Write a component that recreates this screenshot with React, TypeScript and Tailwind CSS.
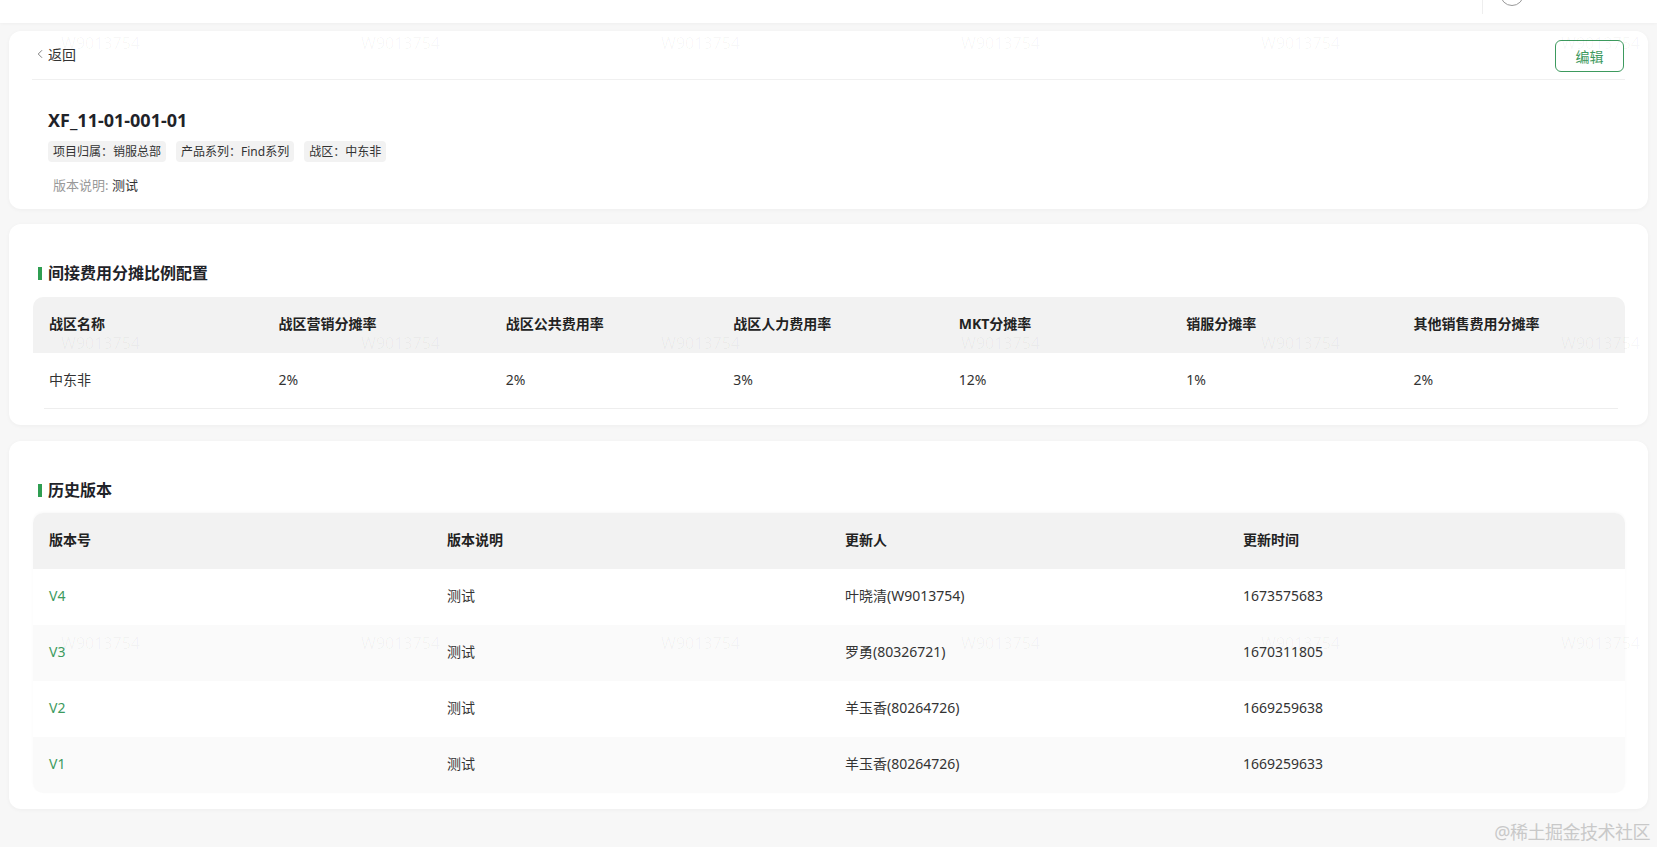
import React from 'react';
import { ChevronLeft } from 'lucide-react';

const rateHeaders = ['战区名称', '战区营销分摊率', '战区公共费用率', '战区人力费用率', 'MKT分摊率', '销服分摊率', '其他销售费用分摊率'];
const rateRow = ['中东非', '2%', '2%', '3%', '12%', '1%', '2%'];

const versions = [
  { no: 'V4', desc: '测试', user: '叶晓清(W9013754)', time: '1673575683' },
  { no: 'V3', desc: '测试', user: '罗勇(80326721)', time: '1670311805' },
  { no: 'V2', desc: '测试', user: '羊玉香(80264726)', time: '1669259638' },
  { no: 'V1', desc: '测试', user: '羊玉香(80264726)', time: '1669259633' },
];

function SectionTitle({ children }: { children: React.ReactNode }) {
  return (
    <div className="flex items-center h-[20px] pl-[5px]">
      <span className="w-[4px] h-[13px] bg-[#2f9e52] mr-[6px]" />
      <h2 className="text-[16px] font-semibold text-[#1f2329] leading-[20px]">{children}</h2>
    </div>
  );
}

function Watermark() {
  const marks = [];
  for (let r = 0; r < 3; r++) {
    for (let c = 0; c < 6; c++) {
      marks.push(
        <span
          key={`${r}-${c}`}
          className="absolute text-[16px] leading-[20px] text-[rgba(0,0,0,0.035)] whitespace-nowrap"
          style={{ left: 61 + c * 300, top: 33 + r * 300 }}
        >
          W9013754
        </span>
      );
    }
  }
  return <div className="pointer-events-none absolute inset-0 overflow-hidden">{marks}</div>;
}

export default function App() {
  return (
    <div
      className="relative min-h-screen bg-[#f7f7f7] text-[#333] overflow-hidden"
      style={{ fontFamily: '"Noto Sans", "Noto Sans CJK SC", sans-serif' }}
    >
      {/* top bar, mostly scrolled out of view */}
      <div className="relative h-[23px] bg-white shadow-[0_1px_3px_rgba(0,0,0,0.03)] overflow-hidden">
        <div className="absolute left-[1482px] top-0 w-px h-[14px] bg-[#eeeeee]" />
        <div className="absolute left-[1500px] top-[-18px] w-[24px] h-[24px] rounded-full border border-[#999]" />
      </div>

      <div className="flex flex-col px-[9px] pt-[8px] pb-[40px]">
        {/* base info */}
        <div className="bg-white rounded-[12px] shadow-[0_1px_4px_rgba(0,0,0,0.04)] h-[178px] px-[23px] pt-[9px]">
          <div className="flex items-center justify-between h-[32px]">
            <button className="flex items-center gap-[1px] pl-[1px] text-[14px] text-[#333] -mt-[4px]">
              <ChevronLeft size={14} strokeWidth={1.4} className="text-[#666]" />
              返回
            </button>
            <button className="w-[69px] h-[32px] rounded-[6px] border border-[#3d9a5e] text-[14px] text-[#3d9a5e] mr-[1px]">
              编辑
            </button>
          </div>
          <div className="mt-[7px] h-px bg-[#f0f0f0]" />
          <div className="pl-[16px]">
            <h1 className="mt-[29px] text-[18px] font-bold text-[#1f2329] leading-[22px]">XF_11-01-001-01</h1>
            <div className="flex gap-[10px] mt-[10px]">
              <span className="h-[21px] px-[5px] rounded-[4px] bg-[#f2f2f2] text-[12px] leading-[21px] text-[#333]">项目归属：销服总部</span>
              <span className="h-[21px] px-[5px] rounded-[4px] bg-[#f2f2f2] text-[12px] leading-[21px] text-[#333]">产品系列：Find系列</span>
              <span className="h-[21px] px-[5px] rounded-[4px] bg-[#f2f2f2] text-[12px] leading-[21px] text-[#333]">战区：中东非</span>
            </div>
            <p className="mt-[13px] pl-[5px] text-[13px] leading-[20px]">
              <span className="text-[#999]">版本说明: </span>
              <span className="text-[#333]">测试</span>
            </p>
          </div>
        </div>

        {/* rate config */}
        <div className="mt-[15px] bg-white rounded-[12px] shadow-[0_1px_4px_rgba(0,0,0,0.04)] pl-[24px] pr-[23px] pt-[39px] pb-[16px]">
          <SectionTitle>间接费用分摊比例配置</SectionTitle>
          <div className="mt-[14px]">
            <div className="grid grid-cols-7 h-[56px] items-center bg-[#f2f2f2] rounded-t-[10px] pb-[3px]">
              {rateHeaders.map((h, i) => (
                <div key={h} className={`${i > 0 && i < 4 ? 'pl-[18px]' : 'pl-[16px]'} pr-[16px] text-[14px] font-bold text-[#222]`}>{h}</div>
              ))}
            </div>
            <div className="grid grid-cols-7 h-[55px] items-center pb-[2px]">
              {rateRow.map((v, i) => (
                <div key={i} className={`${i > 0 && i < 4 ? 'pl-[18px]' : 'pl-[16px]'} pr-[16px] text-[14px] text-[#333]`}>{v}</div>
              ))}
            </div>
            <div className="ml-[11px] mr-[7px] h-px bg-[#eeeeee]" />
          </div>
        </div>

        {/* history */}
        <div className="mt-[16px] bg-white rounded-[12px] shadow-[0_1px_4px_rgba(0,0,0,0.04)] pl-[24px] pr-[23px] pt-[39px] pb-[16px]">
          <SectionTitle>历史版本</SectionTitle>
          <div className="mt-[13px] rounded-[10px] overflow-hidden shadow-[0_-1px_3px_rgba(0,0,0,0.03)]">
            <div className="grid grid-cols-4 h-[56px] items-center bg-[#f2f2f2] pb-[3px]">
              {['版本号', '版本说明', '更新人', '更新时间'].map(h => (
                <div key={h} className="px-[16px] text-[14px] font-bold text-[#222]">{h}</div>
              ))}
            </div>
            {versions.map((v, i) => (
              <div key={v.no} className={`grid grid-cols-4 h-[56px] items-center pb-[3px] ${i % 2 === 1 ? 'bg-[#fafafa]' : 'bg-white'}`}>
                <div className="px-[16px] text-[14px] text-[#3d9a5e]">{v.no}</div>
                <div className="px-[16px] text-[14px] text-[#333]">{v.desc}</div>
                <div className="px-[16px] text-[14px] text-[#333]">{v.user}</div>
                <div className="px-[16px] text-[14px] text-[#333]">{v.time}</div>
              </div>
            ))}
          </div>
        </div>
      </div>

      <Watermark />

      <div className="pointer-events-none absolute right-[7px] bottom-[6px] text-[18px] leading-[22px] text-[#c9c9c9] tracking-[-0.5px]">
        @稀土掘金技术社区
      </div>
    </div>
  );
}
